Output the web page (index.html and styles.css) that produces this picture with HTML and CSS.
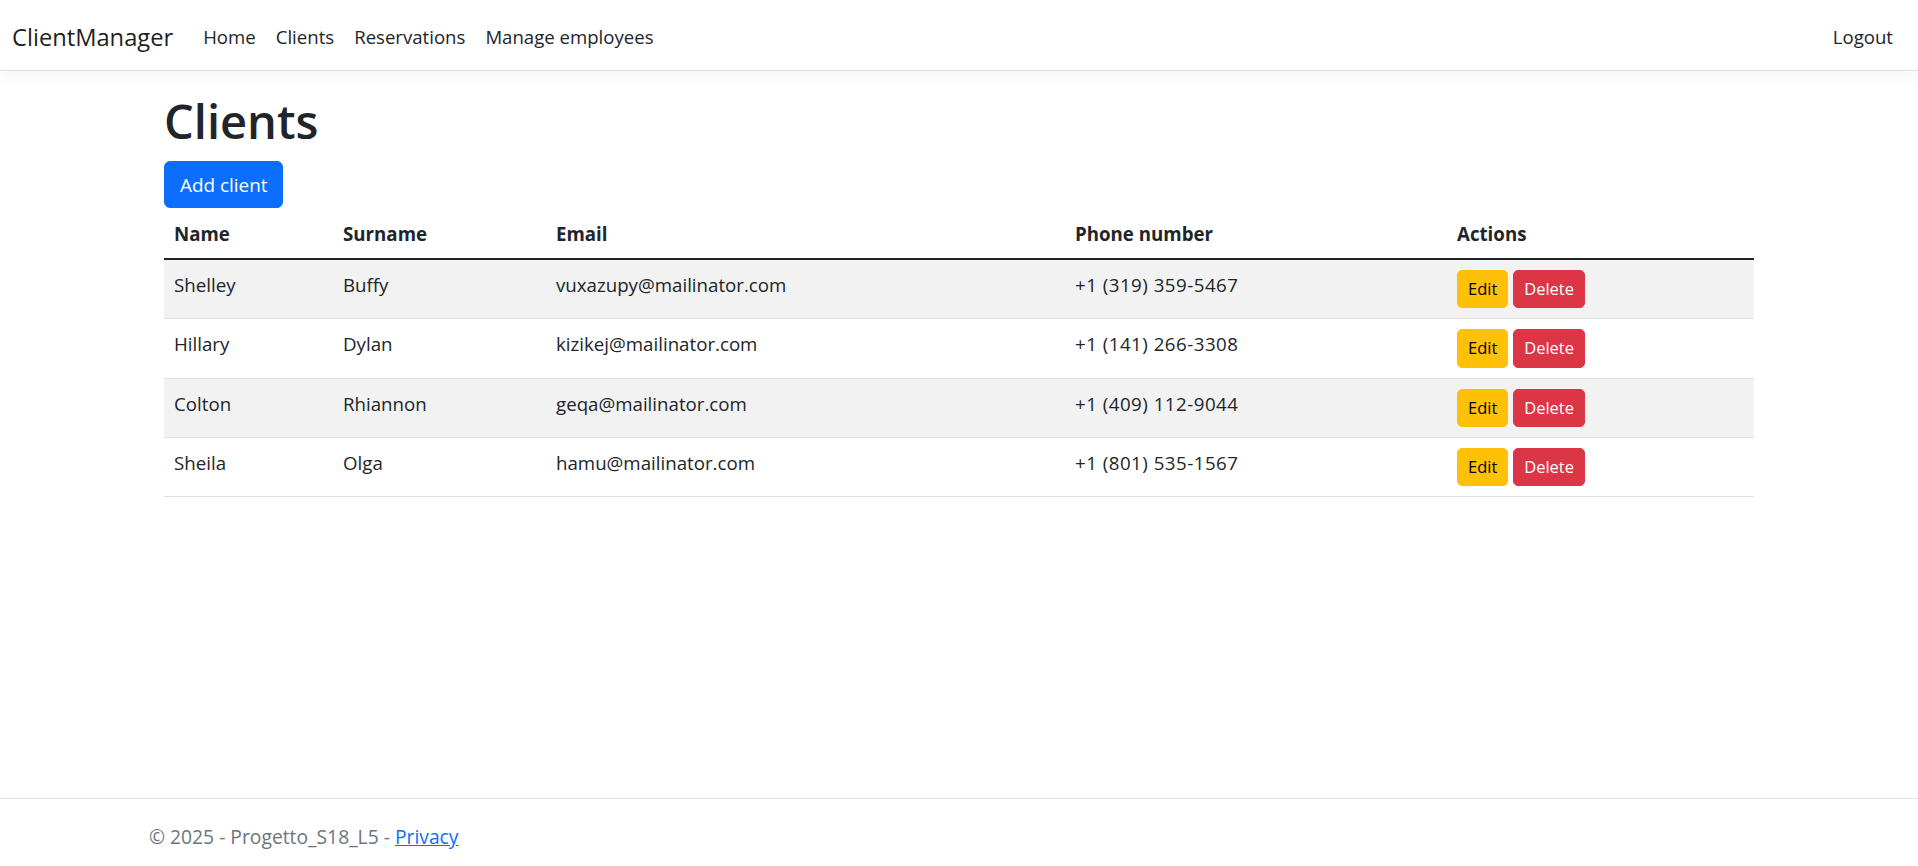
FILE: index.html
```html
<!DOCTYPE html>
<html lang="en">
<head>
<meta charset="utf-8">
<title>Clients - ClientManager</title>
<link rel="stylesheet" href="styles.css">
</head>
<body>
<div class="page">
  <header class="navbar">
    <div class="nav-left">
      <a class="brand" href="#">ClientManager</a>
      <ul class="nav-links">
        <li><a class="nav-link" href="#">Home</a></li>
        <li><a class="nav-link" href="#">Clients</a></li>
        <li><a class="nav-link" href="#">Reservations</a></li>
        <li><a class="nav-link" href="#">Manage employees</a></li>
      </ul>
    </div>
    <a class="nav-link" href="#">Logout</a>
  </header>

  <main class="main">
    <div class="container">
      <div class="inner">
        <h1 class="title">Clients</h1>
        <a class="btn btn-primary" href="#">Add client</a>
        <table class="table">
          <thead>
            <tr>
              <th class="c-name">Name</th>
              <th class="c-surname">Surname</th>
              <th class="c-email">Email</th>
              <th class="c-phone">Phone number</th>
              <th class="c-actions">Actions</th>
            </tr>
          </thead>
          <tbody>
            <tr>
              <td>Shelley</td><td>Buffy</td><td>vuxazupy@mailinator.com</td><td class="phone">+1 (319) 359-5467</td>
              <td><a class="btn-sm btn-warning" href="#">Edit</a> <a class="btn-sm btn-danger" href="#">Delete</a></td>
            </tr>
            <tr>
              <td>Hillary</td><td>Dylan</td><td>kizikej@mailinator.com</td><td class="phone">+1 (141) 266-3308</td>
              <td><a class="btn-sm btn-warning" href="#">Edit</a> <a class="btn-sm btn-danger" href="#">Delete</a></td>
            </tr>
            <tr>
              <td>Colton</td><td>Rhiannon</td><td>geqa@mailinator.com</td><td class="phone">+1 (409) 112-9044</td>
              <td><a class="btn-sm btn-warning" href="#">Edit</a> <a class="btn-sm btn-danger" href="#">Delete</a></td>
            </tr>
            <tr>
              <td>Sheila</td><td>Olga</td><td>hamu@mailinator.com</td><td class="phone">+1 (801) 535-1567</td>
              <td><a class="btn-sm btn-warning" href="#">Edit</a> <a class="btn-sm btn-danger" href="#">Delete</a></td>
            </tr>
          </tbody>
        </table>
      </div>
    </div>
  </main>

  <footer class="footer">
    <div class="container">&copy; 2025 - Progetto_S18_L5 - <a class="privacy" href="#">Privacy</a></div>
  </footer>
</div>
</body>
</html>
```

FILE: styles.css
```css
* { box-sizing: border-box; }

html, body {
  margin: 0;
  padding: 0;
}

body {
  font-family: "Open Sans", "Noto Sans", "Liberation Sans", sans-serif;
  font-size: 18.7px;
  line-height: 1.5;
  color: #212529;
  background: #fff;
}

a { text-decoration: none; }

.page {
  min-height: 100vh;
  display: flex;
  flex-direction: column;
}

/* Navbar */
.navbar {
  height: 71px;
  display: flex;
  align-items: center;
  justify-content: space-between;
  padding: 0 15px 0 12px;
  border-bottom: 1px solid #dee2e6;
  box-shadow: 0 5px 15px rgba(0, 0, 0, 0.04);
  background: #fff;
}

.nav-left {
  display: flex;
  align-items: center;
}

.brand {
  font-size: 23.7px;
  line-height: 37px;
  padding-top: 5px;
  color: rgba(0, 0, 0, 0.9);
  margin-right: 20px;
}

.nav-links {
  display: flex;
  list-style: none;
  margin: 0;
  padding: 0;
}

.nav-link {
  display: block;
  padding: 12px 10px 8px;
  color: #212529;
  font-size: 18.6px;
  line-height: 30px;
}

/* Main */
.main {
  flex: 1;
  padding-top: 20px;
}

.container {
  max-width: 1650px;
  margin: 0 auto;
  padding: 0 15px;
}

.inner {
  padding: 0 15px;
}

.title {
  font-size: 47px;
  line-height: 60px;
  font-weight: 600;
  margin: 0 0 10px;
  color: #212529;
}

.btn {
  display: inline-block;
  font-size: 18.9px;
  line-height: 30px;
  padding: 7.5px 15px;
  border: 1.25px solid transparent;
  border-radius: 6px;
}

.btn-primary {
  background: #0d6efd;
  border-color: #0d6efd;
  color: #fff;
}

/* Table */
.table {
  width: 100%;
  border-collapse: collapse;
  table-layout: fixed;
  margin-bottom: 20px;
}

.table th,
.table td {
  text-align: left;
  vertical-align: top;
  padding: 10px 10px;
  line-height: 30px;
  border-bottom: 1px solid #dee2e6;
}

.table th {
  font-weight: 700;
  padding-top: 11px;
  padding-bottom: 9px;
  border-bottom: 2px solid #212529;
}

.table tbody tr:nth-child(odd) td {
  background: #f2f2f2;
}

.table .phone {
  letter-spacing: 0.5px;
}

.c-name { width: 169px; }
.c-surname { width: 213px; }
.c-email { width: 519px; }
.c-phone { width: 382px; }
.c-actions { width: 307px; }

.btn-sm {
  display: inline-block;
  font-size: 16.5px;
  line-height: 26.25px;
  padding: 5px 10px;
  border: 1.25px solid transparent;
  border-radius: 5px;
}

.btn-warning {
  background: #ffc107;
  border-color: #ffc107;
  color: #000;
}

.btn-danger {
  background: #dc3545;
  border-color: #dc3545;
  color: #fff;
}

/* Footer */
.footer {
  height: 68px;
  border-top: 1px solid #dee2e6;
  color: #6c757d;
  overflow: hidden;
  font-size: 19.3px;
}

.footer .container {
  line-height: 75px;
  white-space: nowrap;
}

.privacy {
  color: #0d6efd;
  text-decoration: underline;
}
```
